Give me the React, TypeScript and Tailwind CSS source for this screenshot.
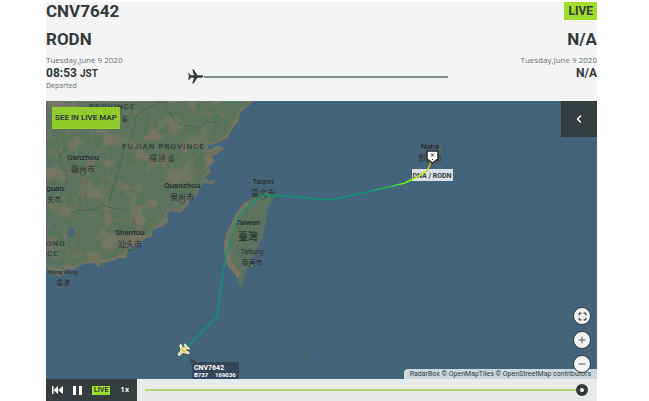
import type { ReactNode } from 'react';
import { ChevronLeft, Maximize, Minus, Plus } from 'lucide-react';

const COAST =
  'M-6 -6H211L208 0 201 6 194 12 193 19 187 27 182 36 174 41 166 44 161 43 163 49 171 45 177 46 178 48 171 53 166 55 168 61 162 66 165 71 159 76 163 80 169 79 166 83 158 82 154 86 151 94 144 99 141 106 134 112 124 110 121 114 122 121 114 126 107 129 106 136 100 137 94 142 86 146 82 149 80 157 73 157 64 161 55 162 52 166 49 162 44 162 38 163 32 166 26 169 21 167 20 172 14 176 9 174 4 170 0 166 -6 168Z';

const TAIWAN =
  'M212 93L222 91 228 96 222 107 220 121 216 137 210 151 205 161 199 171 197 181 195 187 192 182 190 174 182 166 179 157 178 143 180 133 185 123 190 112 199 101Z';

const ROADS = [
  'M-2 30Q20 22 32 38T44 70Q30 90 40 110T82 140',
  'M40 0Q50 30 44 52T80 84Q60 100 84 112T84 148',
  'M0 110Q30 100 48 112T100 118Q120 110 132 90T164 68',
  'M70 -2Q62 30 84 48T120 60Q150 60 166 42',
  'M196 8Q178 32 164 46Q160 66 148 84T118 110Q98 134 76 144T14 166',
  'M140 0Q146 14 162 12T190 18',
  'M56 34Q66 60 62 90T90 146',
  'M0 74Q24 66 38 80T66 130Q74 144 66 152',
  'M0 150Q20 142 34 152T64 150',
  'M110 -2Q100 26 112 48T126 94',
  'M18 -2Q8 30 18 56T12 120Q26 146 20 170',
  'M84 48Q110 30 140 34T176 34',
];

const TAIWAN_ROADS = [
  'M213 96Q196 108 190 126T182 148Q182 162 193 176',
  'M220 94Q206 106 198 126T186 150Q190 160 190 172',
];

const BORDERS = [
  'M22 46Q8 58 18 68T10 100',
  'M22 118Q26 108 38 109T56 104Q68 108 76 108T90 124',
  'M62 104Q68 82 70 78T78 48Q88 36 90 14L116 0',
  'M118 0Q122 10 128 18T154 26L160 20 172 22',
];

interface Place {
  name: string;
  local: string;
  x: number;
  y: number;
}

const PLACES: Place[] = [
  { name: 'Ganzhou', local: '赣州市', x: 37, y: 59 },
  { name: 'Quanzhou', local: '泉州市', x: 136, y: 87 },
  { name: 'Shantou', local: '汕头市', x: 84, y: 134 },
  { name: 'Taipei', local: '臺北市', x: 217, y: 83 },
  { name: 'Naha', local: '那霸市', x: 384, y: 48 },
];

function PlaneIcon({ className }: { className?: string }) {
  return (
    <svg className={className} viewBox="0 0 24 24" fill="currentColor" aria-hidden="true">
      <path d="M23 12c0-1-1.200-1.700-2.500-1.700h-5.800L9.500 2H7.400l2.500 8.300H5.200L3 7.500H1.500l1.200 4.500-1.200 4.500H3l2.200-2.800h4.700L7.400 22h2.100l5.200-8.300h5.800C21.800 13.700 23 13 23 12z" />
    </svg>
  );
}

function MapCanvas() {
  return (
    <svg
      className="absolute inset-0 h-full w-full font-['Roboto','Noto_Sans_CJK_SC',sans-serif]"
      viewBox="0 0 551 278"
      preserveAspectRatio="xMinYMin slice"
      role="img"
      aria-label="Flight track map"
    >
      <defs>
        <clipPath id="land">
          <path d={COAST} />
          <path d={TAIWAN} />
        </clipPath>
        <filter id="terrain" x="0" y="0" width="100%" height="100%" colorInterpolationFilters="sRGB">
          <feTurbulence type="fractalNoise" baseFrequency="0.06" numOctaves="4" seed="8" />
          <feColorMatrix values="0 0 0 0 0.50  0 0 0 0 0.47  0 0 0 0 0.40  5 0 0 0 -2.4" />
        </filter>
        <linearGradient id="arrival" gradientUnits="userSpaceOnUse" x1="325" y1="90" x2="386" y2="60">
          <stop offset="0" stopColor="#149c6d" />
          <stop offset="0.3" stopColor="#2fc24d" />
          <stop offset="0.5" stopColor="#6bea28" />
          <stop offset="0.75" stopColor="#c5ee25" />
          <stop offset="1" stopColor="#f3b51f" />
        </linearGradient>
      </defs>

      <rect width="551" height="278" fill="#44647b" />
      <g clipPath="url(#land)">
        <rect x="-6" y="-6" width="240" height="200" fill="#59735e" />
        <rect x="0" y="0" width="178" height="194" filter="url(#terrain)" opacity="0.7" />
        <path d={COAST} fill="none" stroke="#7b7763" strokeWidth="6" opacity="0.6" />
        <path d="M178 143L185 123 199 101" fill="none" stroke="#7b7763" strokeWidth="9" opacity="0.8" />
        <path d="M178 143L181 164 192 176" fill="none" stroke="#7b7763" strokeWidth="10" opacity="0.8" />
        <g fill="none" stroke="#8d7062" strokeWidth="1" opacity="0.6">
          {ROADS.map((d) => (
            <path key={d} d={d} />
          ))}
          {TAIWAN_ROADS.map((d) => (
            <path key={d} d={d} />
          ))}
        </g>
        <g fill="none" stroke="#46514f" strokeWidth="1" strokeDasharray="3 1" opacity="0.7">
          {BORDERS.map((d) => (
            <path key={d} d={d} />
          ))}
        </g>
        <path d="M24 126l3 1 1 4-2 5-5-1 1-6z" fill="#44647b" />
      </g>
      <g fill="#56705b">
        <path d="M386 54l5-3 3-7 2 3-4 8-4 1z" />
        <path d="M452 25l4-2v2zM270 205l2 2-2 1zM259 254l4 3-2 2z" />
      </g>

      <g fill="#343c3b" fontSize="8" letterSpacing="1" fontWeight="500">
        <text x="43" y="8">PROVINCE</text>
        <text x="75" y="20" fontSize="7">省</text>
        <text x="76" y="48">FUJIAN PROVINCE</text>
        <text x="103" y="60" fontSize="8" fontWeight="400">福建省</text>
        <text x="0" y="145">ONG</text>
        <text x="1" y="155">CE</text>
      </g>
      <g
        fill="#252b2e"
        stroke="#66786f"
        strokeWidth="1"
        strokeOpacity="0.3"
        paintOrder="stroke"
        fontSize="8"
        fontWeight="500"
        textAnchor="middle"
      >
        {PLACES.map((place) => (
          <g key={place.name}>
            <text x={place.x} y={place.y}>{place.name}</text>
            <text x={place.x} y={place.y + 12} fontWeight="400">{place.local}</text>
            <circle cx={place.x} cy={place.y + 13} r="2" fill="#65736b" stroke="#252b2e" strokeOpacity="1" />
          </g>
        ))}
        <text x="9" y="90">guan</text>
        <text x="8" y="101" fontSize="7" fontWeight="400">关市</text>
        <text x="202" y="124" fontStyle="italic">Taiwan</text>
        <text x="202" y="139" fontSize="10">臺灣</text>
        <text x="206" y="153" fontSize="7" fontWeight="400">Taitung</text>
        <text x="206" y="164" fontSize="7" fontWeight="400">臺東市</text>
        <circle cx="206" cy="165" r="2" fill="#65736b" stroke="#252b2e" strokeOpacity="1" />
        <text x="17" y="173" fontSize="6" fontStyle="italic">Hong Kong</text>
        <text x="17" y="184" fontSize="7" fontWeight="400">香港</text>
      </g>

      <rect x="366" y="68" width="41" height="12" fill="#d8e0e5" />
      <text x="386" y="77" textAnchor="middle" fontSize="7" fontWeight="700" fill="#343b3e">
        DNA / RODN
      </text>

      <g fill="none" strokeWidth="1.500" strokeLinejoin="round" strokeLinecap="round">
        <path d="M138 249L171 216 176 180 180 155 187 131 192 117 199 108 216 94 240 95 285 99 325 90" stroke="#149373" />
        <path d="M325 90L359 82 369 77 381 70 386 59" stroke="url(#arrival)" />
      </g>
      <path d="M381 50h11v8l-5.500 4-5.500-4z" fill="#fff" stroke="#262b2d" strokeWidth="1.500" />
      <path d="M385 52.500l3 3m0-3l-3 3M386.500 58v1" stroke="#262b2d" fill="none" />

      <g transform="translate(137 249.500) rotate(135) scale(.58)">
        <path
          d="M11 0C11-1 10-1.700 8.500-1.700H2.700L-2.500-10h-2.100l2 8.300H-7L-9-5h-1.500L-9.300 0l-1.200 5H-9l2-3.300h4.400l-2 8.300h2.100L2.700 1.700h5.800C10 1.700 11 1 11 0z"
          fill="#e6c544"
          stroke="#f4efca"
          strokeWidth="2"
        />
      </g>
      <path d="M143 257l10 5v-1h40v17h-47v-14z" fill="#33465a" />
      <g fill="#fff" fontSize="7" fontWeight="700">
        <text x="148" y="269">CNV7642</text>
        <text x="148" y="276" fontSize="6">B737</text>
        <text x="169" y="276" fontSize="6">169036</text>
      </g>
    </svg>
  );
}

function RoundButton({ label, children }: { label: string; children: ReactNode }) {
  return (
    <button
      type="button"
      aria-label={label}
      className="flex size-[18px] items-center justify-center rounded-full border border-[#30383a] bg-[#f3f3f3] text-[#30383a]"
    >
      {children}
    </button>
  );
}

function FlightHeader() {
  return (
    <header className="bg-[#f4f4f4] pb-2.5 text-[#333a3c]">
      <div className="flex items-start justify-between">
        <h1 className="text-[17px] leading-[18px] font-bold">CNV7642</h1>
        <span className="bg-[#a0dc2b] px-1 text-xs leading-[18px] font-bold">LIVE</span>
      </div>
      <div className="flex pt-[9px]">
        <div>
          <h2 className="text-[17px] leading-5 font-bold">RODN</h2>
          <p className="pt-1 font-['Open_Sans'] text-[8px] leading-[14px] text-[#687174]">Tuesday,June 9 2020</p>
          <p className="text-xs leading-[13px] font-bold">
            08:53 <span className="text-[10px]">JST</span>
          </p>
          <p className="font-['Open_Sans'] text-[7px] leading-[11px] text-[#687174]">Departed</p>
        </div>
        <div className="flex flex-1 items-center self-end pb-1.5 pl-16">
          <PlaneIcon className="size-[17px]" />
          <div className="h-0.5 flex-1 bg-[#7c8c87]" />
          <div className="w-[72px]" />
        </div>
        <div className="text-right">
          <h2 className="text-[17px] leading-5 font-bold">N/A</h2>
          <p className="pt-1 font-['Open_Sans'] text-[8px] leading-[14px] text-[#687174]">Tuesday,June 9 2020</p>
          <p className="text-xs leading-[13px] font-bold">N/A</p>
        </div>
      </div>
    </header>
  );
}

function PlaybackBar() {
  return (
    <div className="flex h-[22px] bg-[#e9eaea]">
      <div className="flex w-[91px] items-center justify-between bg-[#363d3f] pr-2 pl-1.5 text-white">
        <button type="button" aria-label="Restart">
          <svg className="h-2 w-[11px]" viewBox="0 0 11 8" fill="currentColor">
            <path d="M0 0h1.500v8H0zM6 0v8L1.500 4zM11 0v8L6 4z" />
          </svg>
        </button>
        <button type="button" aria-label="Pause">
          <svg className="h-[9px] w-[9px]" viewBox="0 0 9 9" fill="currentColor">
            <path d="M0 0h3v9H0zM6 0h3v9H6z" />
          </svg>
        </button>
        <button type="button" className="bg-[#a0dc2b] px-0.5 text-[7px] leading-[9px] font-bold text-[#333a3c]">
          LIVE
        </button>
        <button type="button" className="text-[8px] font-bold">1x</button>
      </div>
      <div className="flex flex-1 items-center pr-[9px] pl-2">
        <input
          type="range"
          aria-label="Playback position"
          defaultValue={100}
          className="h-3 w-full appearance-none bg-transparent [&::-webkit-slider-runnable-track]:h-0.5 [&::-webkit-slider-runnable-track]:bg-[#b3d66b] [&::-webkit-slider-thumb]:-mt-[5px] [&::-webkit-slider-thumb]:size-3 [&::-webkit-slider-thumb]:appearance-none [&::-webkit-slider-thumb]:rounded-full [&::-webkit-slider-thumb]:border-4 [&::-webkit-slider-thumb]:border-[#333a3c] [&::-webkit-slider-thumb]:bg-white"
        />
      </div>
    </div>
  );
}

export default function App() {
  return (
    <div className="min-h-screen bg-white pr-[52px] pl-[46px] font-['Roboto',sans-serif]">
      <main className="flex min-h-screen flex-col pt-0.5">
        <FlightHeader />
        <section className="relative flex flex-1 flex-col justify-between overflow-hidden bg-[#44647b]">
          <MapCanvas />
          <div className="relative flex items-start justify-between">
            <a
              href="#live-map"
              className="mt-1.5 ml-1.5 bg-[#91cd2c] px-[3px] text-[8px] leading-[22px] font-bold text-[#333a3c]"
            >
              SEE IN LIVE MAP
            </a>
            <button
              type="button"
              aria-label="Open details"
              className="flex size-9 items-center justify-center bg-[#363d3f] text-white"
            >
              <ChevronLeft size={12} strokeWidth={3} />
            </button>
          </div>
          <div className="relative flex flex-col items-end">
            <div className="z-10 -mb-1 flex flex-col gap-1.5 pr-1.5">
              <RoundButton label="Full screen">
                <Maximize size={9} strokeWidth={3} />
              </RoundButton>
              <RoundButton label="Zoom in">
                <Plus size={10} strokeWidth={2} />
              </RoundButton>
              <RoundButton label="Zoom out">
                <Minus size={10} strokeWidth={2} />
              </RoundButton>
            </div>
            <p className="rounded-tl-sm bg-[#ccd7de] px-1.5 text-[7px] leading-[10px] text-[#333a3c]">
              RadarBox © OpenMapTiles © OpenStreetMap contributors
            </p>
          </div>
        </section>
        <PlaybackBar />
      </main>
    </div>
  );
}
